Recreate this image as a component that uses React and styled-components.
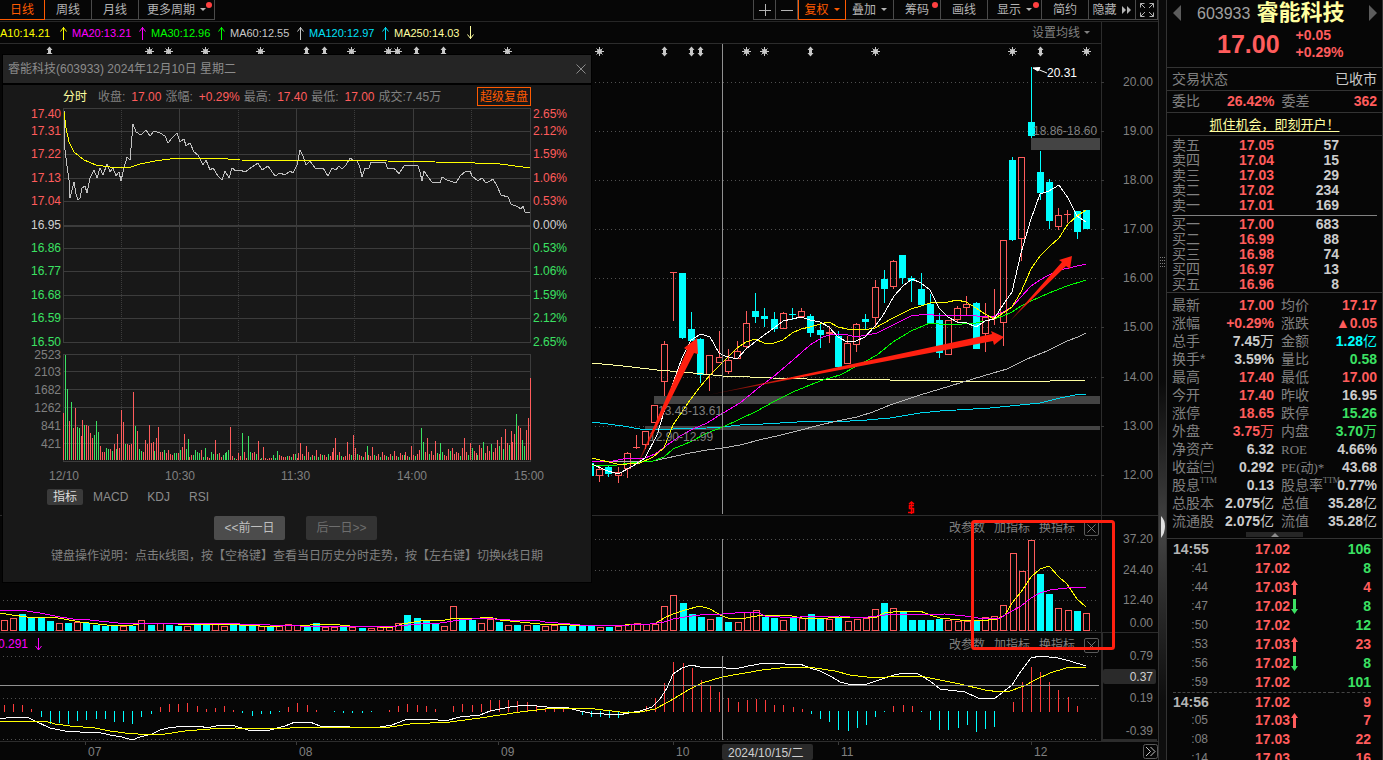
import React from "react";
import styled, { createGlobalStyle } from "styled-components";

const RED = "#ff5c5c";
const GREEN = "#3be163";
const CYAN = "#00ffff";
const GRAY = "#808080";
const LINE = "#333333";
const ORANGE = "#ff5a00";
const PALE = "#ffffa0";

const Global = createGlobalStyle`
  * { box-sizing: border-box; }
  html, body { margin: 0; background: #060606; }
  body {
    font-family: "Liberation Sans", "Noto Sans CJK SC", sans-serif;
    font-size: 12px;
    line-height: 16px;
    color: #b4b4b4;
    overflow: hidden;
  }
  button { font: inherit; color: inherit; background: none; border: 0; padding: 0; margin: 0; cursor: pointer; }
  table { border-collapse: collapse; table-layout: fixed; width: 100%; }
  td, th { padding: 0; font-weight: normal; white-space: nowrap; }
  svg { display: block; flex: none; }
`;

/* ---------- page frame ---------- */
const Page = styled.div`
  display: flex;
  height: 100vh;
  background: #060606;
`;
const Main = styled.main`
  position: relative;
  flex: 1;
  min-width: 0;
  overflow: hidden;
  display: flex;
  flex-direction: column;
  border-right: 1px solid ${LINE};
`;
const Gutter = styled.div`
  width: 7px;
  display: flex;
  flex-direction: column;
  background: linear-gradient(#0a0a0a 50%, #444 70%, #333 76%, #0e0e0e 92%);
`;

/* ---------- toolbar ---------- */
const Toolbar = styled.header`
  display: flex;
  justify-content: space-between;
  height: 22px;
  border-bottom: 1px solid #262626;
  flex: none;
`;
const ToolGroup = styled.nav`
  display: flex;
  height: 20px;
`;
const ToolButton = styled.button`
  display: flex;
  align-items: center;
  justify-content: center;
  gap: 5px;
  position: relative;
  width: ${(p) => p.$w}px;
  border: solid ${(p) => (p.$on ? ORANGE : "#4a4a4a")};
  border-width: 0 1px 1px ${(p) => (p.$edge ? "1px" : "0")};
  && { color: ${(p) => (p.$on ? ORANGE : "#b4b4b4")}; }
`;
const Caret = styled.span`
  width: 0;
  height: 0;
  border: 3px solid transparent;
  border-top-color: currentColor;
  border-bottom: 0;
`;
const Dot = styled.span`
  position: absolute;
  top: 2px;
  right: 2px;
  width: 6px;
  height: 6px;
  border-radius: 50%;
  background: #ff4040;
`;

/* ---------- moving average row ---------- */
const MaRow = styled.div`
  display: flex;
  align-items: center;
  height: 22px;
  flex: none;
  margin-right: 56px;
  padding-right: 11px;
  border: solid #2c2c2c;
  border-width: 0 1px 1px 0;
  font-size: 11px;
`;
const MaItem = styled.span`
  display: flex;
  align-items: center;
  gap: 7px;
  padding-right: 5px;
  white-space: nowrap;
  color: ${(p) => p.$c};
`;
const MaText = styled.span`
  min-width: ${(p) => p.$w}px;
`;
const MaSettings = styled.button`
  display: flex;
  align-items: center;
  gap: 4px;
  margin-left: auto;
  && { color: ${GRAY}; font-size: 12px; }
`;

/* ---------- charts ---------- */
const Charts = styled.section`
  position: relative;
  display: flex;
  flex-direction: column;
  flex: 1;
`;
const Panel = styled.div`
  position: relative;
  display: flex;
  justify-content: flex-end;
  & + & { border-top: 1px solid #2c2c2c; }
`;
const Overlay = styled.svg`
  position: absolute;
  top: 0;
  right: 0;
  pointer-events: none;
`;
const PanelTools = styled.div`
  position: absolute;
  top: 4px;
  right: 59px;
  display: flex;
  align-items: center;
  gap: 9px;
  color: ${GRAY};
`;
const CloseBox = styled.button`
  display: grid;
  place-items: center;
  width: 15px;
  height: 15px;
  border: 1px solid #5a5a5a !important;
  border-radius: 2px;
`;
const Label = styled.text`
  font-size: 12px;
  fill: ${(p) => p.$c || GRAY};
`;

/* ---------- day popup ---------- */
const Popup = styled.section`
  position: absolute;
  left: 3px;
  top: 55px;
  width: 588px;
  background: #181818;
  box-shadow: 0 0 0 1px #000;
  display: flex;
  flex-direction: column;
`;
const PopupHead = styled.div`
  display: flex;
  align-items: center;
  justify-content: space-between;
  height: 30px;
  padding: 0 5px;
  background: #252525;
  border-bottom: 2px solid #000;
  color: #8c8c8c;
`;
const InfoRow = styled.div`
  display: flex;
  align-items: center;
  gap: 4px;
  height: 23px;
  padding: 0 60px;
  color: ${GRAY};
`;
const InfoTitle = styled.span`
  margin-right: 7px;
  color: ${PALE};
`;
const Info = styled.span`
  display: flex;
  gap: 6px;
`;
const InfoValue = styled.span`
  color: ${RED};
`;
const Replay = styled.button`
  margin-left: auto;
  width: 54px;
  height: 19px;
  border: 1px solid ${ORANGE} !important;
  && { color: ${ORANGE}; }
`;
const Tabs = styled.div`
  display: flex;
  gap: 19px;
  margin: 3px 0 0 44px;
  height: 16px;
`;
const Tab = styled.button`
  && {
    color: ${(p) => (p.$on ? "#dddddd" : "#8c8c8c")};
    background: ${(p) => (p.$on ? "#3a3a3a" : "none")};
    padding: ${(p) => (p.$on ? "0 6px" : "0")};
    margin-right: ${(p) => (p.$on ? "-9px" : "0")};
    border-radius: 2px;
  }
`;
const Pager = styled.div`
  display: flex;
  gap: 21px;
  margin: 11px 0 0 211px;
`;
const PageButton = styled.button`
  width: 71px;
  height: 24px;
  border-radius: 2px;
  && {
    background: ${(p) => (p.disabled ? "#333333" : "#4c4c4c")};
    color: ${(p) => (p.disabled ? "#6e6e6e" : "#c0c0c0")};
  }
`;
const Help = styled.p`
  margin: 8px 0 18px 48px;
  color: ${GRAY};
  white-space: nowrap;
`;

/* ---------- side panel ---------- */
const Side = styled.aside`
  width: 217px;
  display: flex;
  flex-direction: column;
  overflow: hidden;
  border: solid ${LINE};
  border-width: 0 1px;
  font-size: 14px;
  line-height: 15px;
`;
const Quote = styled.div`
  height: 68px;
  flex: none;
  border-bottom: 1px solid ${LINE};
`;
const QuoteName = styled.div`
  display: flex;
  align-items: center;
  height: 26px;
  padding: 0 5px 0 6px;
`;
const Code = styled.span`
  margin-left: 16px;
  font-size: 16px;
  color: #a0a0a0;
`;
const Name = styled.h1`
  margin: 0 auto 0 6px;
  font-size: 22px;
  line-height: 26px;
  color: ${PALE};
`;
const QuotePrice = styled.div`
  display: flex;
  align-items: center;
  gap: 16px;
  height: 36px;
  padding-left: 50px;
  color: ${RED};
  font-weight: bold;
`;
const Big = styled.span`
  font-size: 25px;
`;
const Change = styled.span`
  line-height: 17px;
`;
const Strip = styled.div`
  display: flex;
  align-items: center;
  justify-content: ${(p) => (p.$center ? "center" : "space-between")};
  height: 23px;
  flex: none;
  padding: 0 5px;
  border-bottom: 1px solid ${LINE};
  color: ${GRAY};
`;
const StatusText = styled.span`
  color: #c8c8c8;
`;
const AdLink = styled.a`
  font-size: 13px;
  color: ${PALE};
  text-underline-offset: 2px;
`;
const Block = styled.div`
  flex: none;
  padding: ${(p) => p.$pad};
  border-bottom: 1px solid ${LINE};
`;
const BookLine = styled.hr`
  margin: 2px 0 1px;
  border: 0;
  border-top: 1px solid #808080;
`;
const Row = styled.tr`
  height: ${(p) => p.$h}px;
  line-height: ${(p) => p.$h}px;
  ${(p) => p.$dash && "border-top: 1px dashed #444;"}
`;
const Key = styled.th`
  text-align: left;
  color: ${GRAY};
  padding-left: ${(p) => p.$pl || 0}px !important;
`;
const Val = styled.td`
  text-align: right;
  font-weight: bold;
  color: ${(p) => p.$c || "#cccccc"};
  padding-right: ${(p) => p.$pr || 0}px !important;
`;
const Latin = styled.span`
  font-family: "Liberation Serif", "Noto Sans CJK SC", serif;
  font-size: 13px;
  line-height: 12px;
`;
const Sup = styled.span`
  display: inline-block;
  vertical-align: top;
  height: 10px;
  line-height: 10px;
  font-family: "Liberation Serif", serif;
  font-size: 8px;
`;
const Unit = styled.span`
  font-weight: normal;
  line-height: 12px;
`;
const Handle = styled.button`
  display: grid !important;
  place-items: center;
  width: 57px;
  height: 5px;
  margin: 2px auto 1px 74px !important;
  background: #262626 !important;
`;
const Ticks = styled.div`
  flex: 1;
  min-height: 0;
  overflow: hidden;
  padding: 1px 11px 0 6px;
`;
const TickTime = styled.th`
  text-align: right;
  padding-right: 1px !important;
  font-size: ${(p) => (p.$full ? 14 : 12)}px;
  font-weight: ${(p) => (p.$full ? "bold" : "normal")} !important;
  color: ${(p) => (p.$full ? "#b4b4b4" : GRAY)};
`;
const TickPrice = styled.div`
  display: flex;
  align-items: center;
  gap: 1px;
  padding-left: 46px;
  color: ${RED};
`;

/* ---------- data ---------- */
const BARS = 119;
const barX = (i) => Math.round(1086 - 9.17 * (BARS - 1 - i));

// [x, high, body top, body bottom, low, rising]
const candles = [
  [590, 462, 463, 476, 477, 0], [599, 466, 469, 476, 482, 1], [608, 465, 467, 474, 477, 0],
  [618, 467, 472, 476, 483, 1], [627, 452, 453, 469, 478, 1], [636, 435, 447, 448, 449, 1],
  [645, 431, 431, 445, 449, 1], [654, 405, 405, 423, 423, 1], [664, 341, 344, 382, 396, 1],
  [673, 272, 272, 273, 321, 1], [682, 273, 273, 338, 339, 0], [691, 312, 329, 341, 341, 0],
  [700, 338, 339, 375, 383, 0], [709, 355, 355, 375, 391, 1], [719, 331, 357, 363, 363, 1],
  [728, 349, 360, 372, 374, 1], [737, 341, 351, 359, 359, 1], [746, 311, 323, 347, 348, 1],
  [755, 293, 311, 317, 323, 0], [764, 308, 316, 319, 327, 0], [774, 312, 319, 329, 332, 0],
  [783, 312, 313, 329, 329, 1], [792, 308, 314, 315, 320, 0], [801, 308, 311, 317, 318, 1],
  [810, 314, 316, 333, 337, 0], [820, 322, 330, 335, 348, 0], [829, 326, 332, 334, 343, 1],
  [838, 331, 336, 367, 368, 0], [847, 336, 343, 364, 364, 1], [856, 323, 324, 345, 352, 1],
  [865, 314, 319, 322, 330, 0], [875, 280, 287, 318, 327, 1], [884, 270, 279, 289, 303, 0],
  [893, 260, 261, 287, 289, 1], [902, 255, 255, 278, 284, 0], [911, 276, 278, 281, 302, 0],
  [921, 273, 289, 305, 305, 0], [930, 294, 304, 323, 323, 0], [939, 313, 320, 353, 358, 0],
  [948, 320, 320, 355, 355, 1], [957, 306, 308, 320, 322, 1], [966, 296, 304, 308, 316, 1],
  [976, 302, 303, 349, 349, 0], [985, 303, 317, 334, 352, 1], [994, 289, 317, 318, 325, 1],
  [1003, 240, 240, 323, 346, 1], [1012, 157, 160, 240, 241, 0], [1021, 157, 157, 239, 261, 1],
  [1031, 67, 122, 136, 138, 0], [1040, 151, 172, 193, 200, 0], [1049, 179, 182, 221, 229, 0],
  [1058, 208, 215, 227, 230, 1], [1067, 210, 214, 215, 223, 1], [1077, 211, 211, 232, 239, 0],
  [1086, 210, 210, 229, 229, 0],
];

const averages = [
  [PALE, "592,363 623,366 657,370 683,372 703,374 723,376 750,377 773,378 807,379 857,379 890,380 926,380 950,381 985,382 1003,381 1050,381 1086,380"],
  ["#00d8f0", "592,422 623,426 640,429 673,429 707,428 723,427 740,425 763,424 797,422 823,421 850,421 867,420 890,418 920,413 940,411 990,408 1020,405 1040,403 1060,398 1075,395 1086,394"],
  ["#b4b4b4", "592,462 653,461 667,458 690,453 707,450 723,448 740,445 763,439 777,436 797,431 820,425 837,421 857,417 873,412 890,405 920,395 950,386 973,379 993,373 1007,369 1027,359 1047,351 1067,341 1078,337 1086,333"],
  ["#00ff00", "592,466 617,465 623,464 640,462 653,461 664,457 673,449 690,442 707,433 723,427 740,419 757,411 773,402 793,392 810,385 823,380 840,375 857,366 877,355 893,342 911,331 930,323 948,325 976,323 994,319 1003,316 1012,312 1021,306 1031,301 1049,293 1067,286 1086,280"],
  ["#ff00ff", "592,462 613,461 628,458 645,458 655,454 670,443 680,436 693,429 707,423 723,413 740,403 757,389 773,377 793,360 810,345 823,337 833,334 848,335 856,337 877,333 893,325 911,316 927,314 940,316 966,315 977,316 994,316 1003,312 1012,307 1021,297 1031,286 1040,280 1049,275 1060,270 1073,267 1086,264"],
  ["#ffff00", "592,458 617,464 627,464 640,463 653,457 664,448 673,425 682,412 690,400 700,387 710,375 722,363 737,348 746,342 755,339 764,343 774,343 783,340 792,333 801,329 810,327 820,324 829,322 838,327 847,329 863,330 875,328 893,318 911,309 921,306 930,303 948,302 957,300 966,302 976,308 985,314 994,319 1003,313 1012,307 1021,292 1031,269 1040,256 1049,247 1059,238 1068,224 1077,216 1086,210"],
  ["#ffffff", "592,464 605,470 618,474 633,466 645,458 657,435 664,412 673,383 682,358 691,340 701,334 710,337 719,353 725,356 737,359 746,349 760,338 774,328 783,321 792,319 801,317 810,320 820,322 829,327 838,337 847,342 856,341 865,337 875,326 882,317 890,303 894,296 903,286 912,279 921,283 930,290 939,308 948,317 957,322 967,323 976,327 985,321 994,319 1003,305 1012,292 1021,253 1031,219 1040,194 1049,191 1059,185 1068,198 1077,216 1086,222"],
];

const volumes = (
  "r11 r13 c17 c13 c13 c10 r8 c8 r9 c8 c6 c5 c6 r5 c5 r11 c6 r8 c6 c5 r5 c6 c7 r7 r5 c6 c6 c7 r5 c4 r5 r7 r6 c5 c8 r4 r4 c5 r4 c3 r3 r4 r5 r8 c16 c13 c11 " +
  "c7 r5 r25 c12 c11 r8 r12 c9 r6 c6 r6 c6 r5 r6 c5 c5 c5 c5 r4 c4 r5 r7 r8 r7 r7 r25 r36 c28 c17 c14 r12 c14 c9 r9 r19 r21 c14 c13 r11 c13 r13 c17 c12 r12 c14 r10 r12 r13 " +
  "r22 c28 r23 c20 c11 c11 c11 c12 r11 r10 r10 c10 r14 r15 r26 r78 r60 r91 c57 c37 r23 r21 c20 r18"
).split(" ");

const volumeLines = [
  ["#ffff00", "0,613 12,615 27,617 53,617 80,622 107,625 133,625 145,623 160,623 178,624 195,625 210,624 240,625 260,626 280,626 310,625 330,624 350,626 380,627 393,627 402,624 420,621 445,620 455,618 480,618 490,617 500,620 520,622 540,624 570,625 600,626 625,625 650,624 656,623 664,618 673,614 685,610 700,606 710,609 722,616 728,618 737,619 746,618 757,616 785,615 792,616 802,618 828,618 845,617 860,618 877,617 884,613 902,611 920,611 930,615 940,618 960,620 980,621 997,619 1005,615 1012,603 1021,592 1031,577 1040,569 1049,566 1059,577 1067,584 1077,599 1086,607"],
  ["#ff00ff", "0,611 20,610 40,613 60,617 73,619 90,620 118,623 160,623 240,624 300,626 397,626 420,624 440,623 460,620 485,618 495,619 510,620 535,620 545,622 570,624 590,626 630,625 650,624 664,622 673,619 685,617 700,615 722,614 735,613 757,612 765,616 780,617 800,617 840,616 860,618 885,615 945,614 965,616 985,619 1000,618 1012,611 1021,606 1031,598 1040,593 1050,590 1067,588 1086,587"],
];

const histogram = [
  7, 8, 7, 3, -6, -13, -12, -13, -10, -9, -8, -8, -11, -11, -13, -6, -3, 5, 8, 8, 9, 6, 3, 4, 6, 2, -2, -5, -3, -3, -1, 5, 9, 7, 2, 0, -1, -2, -2, -2, -1, 0, 2, 6, 8, 7, 6,
  3, 0, 6, 8, 7, 8, 12, 12, 12, 11, 10, 6, 4, 4, 3, 0, -4, -6, -6, -7, -7, -2, 1, 6, 14, 29, 50, 49, 44, 32, 26, 20, 14, 10, 12, 13, 12, 7, 7, 5, 3, -3, -8, -11, -19, -20, -17, -14,
  -6, -1, 6, 7, 6, -1, -9, -19, -19, -17, -14, -21, -18, -16, 0, 10, 30, 45, 40, 30, 22, 15, 6, 0,
];

const macdLines = [
  ["#ffffff", "0,719 12,717 27,717 35,721 50,728 65,731 80,732 97,732 110,735 122,737 132,740 140,737 152,734 160,730 168,728 185,726 200,726 207,728 220,725 232,725 248,730 270,730 285,726 295,722 310,722 320,726 350,727 380,727 392,725 405,720 430,719 445,721 460,717 480,715 490,711 510,707 527,705 547,707 565,707 580,711 590,713 618,715 640,711 652,707 660,699 667,688 673,674 682,668 691,665 700,667 717,667 735,669 748,666 765,663 785,664 800,664 810,668 820,671 832,677 840,682 848,684 867,684 882,679 894,675 905,673 918,674 930,681 940,689 965,692 978,698 994,699 1003,692 1012,685 1021,671 1031,658 1040,656 1058,658 1070,661 1086,666"],
  ["#ffff00", "0,722 20,721 45,721 55,724 70,726 95,728 110,731 125,733 150,735 165,734 185,731 210,729 235,728 280,729 300,727 390,727 410,724 430,723 450,722 480,718 500,715 520,712 545,709 565,708 595,709 620,712 640,712 655,709 668,702 680,695 690,689 702,683 722,677 745,673 762,670 780,668 800,667 815,668 835,671 850,675 875,678 900,676 925,677 940,680 960,684 985,690 1000,692 1010,691 1024,686 1035,680 1050,673 1066,668 1086,667"],
];

const dayPrice =
  "64,110 65,150 67,166 69,180 70,198 72,190 74,182 76,194 78,200 80,198 82,188 85,186 87,193 90,178 94,170 97,178 100,168 103,175 107,164 110,172 113,168 116,176 119,172 121,181 124,168 127,157 130,160 133,124 136,132 141,135 146,130 150,136 154,131 160,133 165,136 168,143 172,138 177,133 180,142 184,139 186,146 190,143 194,152 198,155 203,165 206,160 210,170 213,168 218,176 222,180 225,171 229,178 232,168 236,171 240,170 245,172 252,167 258,163 262,170 268,166 275,176 280,173 285,175 290,171 293,173 297,165 300,150 303,156 306,165 310,161 315,168 323,168 328,176 332,168 336,170 339,166 342,169 346,165 350,158 354,161 357,160 360,168 362,177 365,168 369,168 371,162 385,162 388,169 393,168 396,170 399,174 402,169 405,165 418,166 420,172 422,181 424,171 428,177 432,182 440,183 442,177 447,180 456,183 460,176 466,171 470,171 472,176 478,181 482,178 486,183 490,181 493,179 497,186 501,195 508,197 511,204 518,207 521,209 523,206 525,212 530,213";
const dayAverage =
  "64,112 66,128 69,142 74,152 84,160 96,165 110,167 128,168 140,164 155,161 170,159 190,158 215,158 240,160 387,161 435,162 475,163 500,164 515,166 530,168";

const dayVolumes = (
  "r47 g105 g71 r39 g58 r32 r52 g33 g32 r24 r40 g35 r35 r34 r27 r22 g25 g39 g28 r14 r8 r8 g12 g11 r11 g9 r16 g11 r26 r12 r50 r38 g16 r16 r15 r16 r68 g34 r29 g11 g9 r8 r20 r16 r35 r17 r18 g9 r22 r33 r8 r8 g10 r7 r10 r6 r5 g7 g7 r7 " +
  "g10 r13 r26 g11 g21 r3 r5 g5 g10 g8 g7 r10 g3 g12 r3 r2 g8 g6 r20 g6 r7 r3 g5 g7 g8 g10 r33 r4 g2 r1 r7 r4 g27 r8 r2 g24 g8 r7 r8 g6 r19 r1 g2 r13 r2 r1 r2 r2 g5 g2 g9 r5 r4 r3 r3 g4 r4 g3 r6 g6 " +
  "r2 r7 r17 r6 g4 r14 r8 g3 r5 g4 r10 g3 r6 g5 r5 r3 g6 r4 r8 r12 r22 g5 r8 g4 r3 r4 r18 r6 g5 r25 r12 g6 r5 r4 g3 r8 g14 r5 r4 r13 g5 r4 r6 g3 r8 r5 g4 r3 r6 g4 r9 r4 g3 r7 r5 " +
  "g5 r8 r4 g3 r14 r5 g4 r6 r10 g32 g18 r8 r22 g6 r9 r5 r19 g7 r6 g17 g8 r5 r4 r11 g9 r12 r6 r8 r7 g4 r12 r22 r8 g5 r17 g12 r9 r7 g5 r15 r12 g18 r7 r14 r9 g16 r8 r12 r20 g14 r23 g11 r31 r17 g15 r29 r18 r26 g46 r34 r32 g20 g14 r30 r42 r82"
).split(" ");

const book = {
  sell: [["卖五", "17.05", "57"], ["卖四", "17.04", "15"], ["卖三", "17.03", "29"], ["卖二", "17.02", "234"], ["卖一", "17.01", "169"]],
  buy: [["买一", "17.00", "683"], ["买二", "16.99", "88"], ["买三", "16.98", "74"], ["买四", "16.97", "13"], ["买五", "16.96", "8"]],
};

const stats = [
  ["最新", "17.00", RED, "均价", "17.17", RED],
  ["涨幅", "+0.29%", RED, "涨跌", "▲0.05", RED],
  ["总手", "7.45万", "", "金额", "1.28亿", CYAN],
  ["换手*", "3.59%", "", "量比", "0.58", GREEN],
  ["最高", "17.40", RED, "最低", "17.00", RED],
  ["今开", "17.40", RED, "昨收", "16.95", ""],
  ["涨停", "18.65", RED, "跌停", "15.26", GREEN],
  ["外盘", "3.75万", RED, "内盘", "3.70万", GREEN],
  ["净资产", "6.32", "", <Latin>ROE</Latin>, "4.66%", ""],
  ["收益㈢", "0.292", "", <Latin>PE(动)*</Latin>, "43.68", ""],
  [<>股息<Sup>TTM</Sup></>, "0.13", "", <>股息率<Sup>TTM</Sup></>, "0.77%", ""],
  ["总股本", "2.075亿", "", "总值", "35.28亿", ""],
  ["流通股", "2.075亿", "", "流值", "35.28亿", ""],
];

const ticks = [
  ["14:55", "17.02", "", "106", GREEN], [":41", "17.02", "", "8", GREEN], [":44", "17.03", "up", "4", RED],
  [":47", "17.02", "down", "8", GREEN], [":50", "17.02", "", "12", GREEN], [":53", "17.03", "up", "23", RED],
  [":56", "17.02", "down", "8", GREEN], [":59", "17.02", "", "101", GREEN], ["14:56", "17.02", "", "9", RED],
  [":05", "17.03", "up", "7", RED], [":08", "17.03", "", "22", RED], [":14", "17.03", "", "16", RED],
];

/* ---------- small drawings ---------- */
const TrendArrow = ({ down }) => (
  <svg width="7" height="14" viewBox="0 0 7 14" fill="none" stroke="currentColor">
    <path d={down ? "M3.5 0V13M0.5 8.5L3.5 12.5L6.5 8.5" : "M3.5 14V1M0.5 5.5L3.5 1.5L6.5 5.5"} />
  </svg>
);
const TickArrow = ({ down }) => (
  <svg width="7" height="15" viewBox="0 0 7 15" fill={down ? GREEN : RED}>
    <path d={down ? "M2 0H5V10H7L3.5 15L0 10H2Z" : "M2 15H5V5H7L3.5 0L0 5H2Z"} />
  </svg>
);
const Cross = ({ size = 9 }) => (
  <svg width={size} height={size} viewBox="0 0 10 10" stroke="currentColor" fill="none">
    <path d="M0.5 0.5L9.5 9.5M9.5 0.5L0.5 9.5" />
  </svg>
);
const StepTriangle = ({ right }) => (
  <svg width="8" height="16" viewBox="0 0 8 16" fill="#5c5c5c">
    <path d={right ? "M0 0L8 8L0 16Z" : "M8 0L0 8L8 16Z"} />
  </svg>
);
const Expand = () => (
  <svg width="14" height="14" viewBox="0 0 14 14" fill="none" stroke="currentColor">
    <path d="M0.5 4.5V0.5H4.5M0.5 0.5L5 5M9.5 0.5H13.5V4.5M13.5 0.5L9 5M0.5 9.5V13.5H4.5M0.5 13.5L5 9M13.5 9.5V13.5H9.5M13.5 13.5L9 9" />
  </svg>
);
const Forward = () => (
  <svg width="10" height="8" viewBox="0 0 10 8" fill="currentColor">
    <path d="M0 0L4 4L0 8ZM5 0L9 4L5 8Z" />
  </svg>
);
const Sun = ({ x, y }) => (
  <g stroke="#c8c8c8" transform={`translate(${x} ${y})`}>
    <circle r="2.5" fill="#c8c8c8" stroke="none" />
    <path d="M-4.5 0H4.5M0 -4.5V4.5M-3 -3L3 3M3 -3L-3 3" />
  </g>
);
const Pin = ({ x, y }) => (
  <path transform={`translate(${x} ${y})`} d="M0 -5L3 -1.5H1.5V1.5H3L0 5L-3 1.5H-1.5V-1.5H-3Z" fill="#c8c8c8" />
);
const Lines = ({ data }) =>
  data.map(([c, pts]) => <polyline key={c} points={pts} fill="none" stroke={c} shapeRendering="crispEdges" />);
const Dotted = ({ ys }) =>
  ys.map((y) => (
    <line key={y} x1="3" x2="1098" y1={y + 0.5} y2={y + 0.5} stroke="#505050" strokeDasharray="1 3" shapeRendering="crispEdges" />
  ));
const AxisLabels = ({ rows }) =>
  rows.map(([y, t]) => (
    <Label key={t} x="1153" y={y + 4} textAnchor="end">{t}</Label>
  ));

function PriceChart() {
  const suns = [149, 168, 205, 260, 351, 388, 397, 507, 599, 746, 764, 875, 1012, 1086];
  const pins = [49, 306, 324, 416, 443, 664, 691, 700, 810, 1040];
  const levels = [82, 131, 180, 229, 278, 327, 377, 426, 475];
  return (
    <svg width="1158" height="471" viewBox="0 44 1158 471" role="img" aria-label="日K线">
      <Dotted ys={levels} />
      <g fill="#444444">
        <rect x="654" y="396" width="446" height="8" />
        <rect x="645" y="426" width="455" height="4" />
        <rect x="1031" y="138" width="69" height="12" />
      </g>
      {suns.map((x) => <Sun key={x} x={x + 0.5} y={51.5} />)}
      {pins.map((x) => <Pin key={x} x={x + 0.5} y={51.5} />)}
      <g shapeRendering="crispEdges">
        {candles.map(([x, hi, top, bot, lo, up]) =>
          up ? (
            <g key={x} fill={RED}>
              <rect x={x} y={hi} width="1" height={top - hi} />
              <rect x={x} y={bot} width="1" height={lo - bot} />
              {bot - top > 2 ? (
                <rect x={x - 2.5} y={top + 0.5} width="6" height={bot - top - 1} fill="none" stroke={RED} />
              ) : (
                <rect x={x - 3} y={top} width="7" height={bot - top} />
              )}
            </g>
          ) : (
            <g key={x} fill={CYAN}>
              <rect x={x} y={hi} width="1" height={lo - hi} />
              <rect x={x - 3} y={top} width="7" height={bot - top} />
            </g>
          )
        )}
      </g>
      <Lines data={averages} />
      <Label x="658" y="415">13.48-13.61</Label>
      <Label x="649" y="441">12.90-12.99</Label>
      <Label x="1033" y="135">18.86-18.60</Label>
      <Label x="1047" y="77" $c="#ffffff">20.31</Label>
      <path d="M1033 68L1040 67.500L1038 71ZM1037 69L1047 73" fill="#fff" stroke="#fff" />
      <path d="M914 505.500H909.500V508.500H913.500V512.500H908M911.500 503V514M909 504L911.500 502L914 504" fill="none" stroke="#ff0000" strokeWidth="1.500" />
      <path d="M1101.500 44V515" stroke="#2c2c2c" fill="none" />
      {levels.map((y) => <rect key={y} x="1101" y={y} width="3" height="1" fill="#3a3a3a" />)}
      <AxisLabels rows={levels.map((y, i) => [y, `${20 - i}.00`])} />
    </svg>
  );
}

function VolumeChart() {
  return (
    <svg width="1158" height="116" viewBox="0 516 1158 116" role="img" aria-label="成交量">
      <Dotted ys={[539, 570, 600, 630]} />
      <g shapeRendering="crispEdges">
        {volumes.map((v, i) => {
          const h = Number(v.slice(1));
          const x = barX(i);
          return v[0] === "r" ? (
            <rect key={i} x={x - 2.5} y={631.5 - h} width="6" height={h - 1} fill="#060606" stroke={RED} />
          ) : (
            <rect key={i} x={x - 3} y={631 - h} width="7" height={h} fill={CYAN} />
          );
        })}
      </g>
      <Lines data={volumeLines} />
      <path d="M1101.500 516V632" stroke="#2c2c2c" />
      <AxisLabels rows={[[539, "37.20"], [570, "24.40"], [600, "12.40"], [623, "0.00"]]} />
    </svg>
  );
}

function MacdChart() {
  return (
    <svg width="1158" height="108" viewBox="0 633 1158 108" role="img" aria-label="MACD">
      <Dotted ys={[656, 698, 739]} />
      <Label x="-2" y="648" $c="#ff00ff">0.291</Label>
      <path d="M38.500 638V650M35.500 646L38.500 650L41.500 646" stroke="#ff00ff" fill="none" />
      <g shapeRendering="crispEdges">
        {histogram.map((v, i) => (
          <rect key={i} x={barX(i)} y={v > 0 ? 712 - v : 711} width="1" height={Math.abs(v)} fill={v > 0 ? "#ff3c3c" : CYAN} />
        ))}
      </g>
      <Lines data={macdLines} />
      <path d="M1102 633V740H1157" stroke="#2c2c2c" strokeWidth="2" fill="none" />
      <rect x="1103" y="669" width="53" height="15" rx="2" fill="#2a2a2a" />
      <AxisLabels rows={[[656, "0.79"], [698, "0.19"], [731, "-0.39"]]} />
      <Label x="1153" y="681" textAnchor="end" $c="#d0d0d0">0.37</Label>
    </svg>
  );
}

function TimeAxis() {
  const months = [[85, "07"], [296, "08"], [498, "09"], [673, "10"], [838, "11"], [1031, "12"]];
  return (
    <svg width="1158" height="18" viewBox="0 742 1158 18" role="img" aria-label="时间轴">
      {months.map(([x, t]) => (
        <g key={t}>
          <rect x={x} y="742" width="1" height="3" fill="#3a3a3a" />
          <Label x={x + 3} y="756">{t}</Label>
        </g>
      ))}
      <rect x="722" y="744" width="91" height="16" rx="2" fill="#2a2a2a" />
      <Label x="728" y="757" $c="#d0d0d0">2024/10/15/二</Label>
      <rect x="1143.500" y="744.500" width="14" height="14" rx="2" fill="none" stroke="#5a5a5a" />
      <path d="M1146 747L1150.500 751.500L1146 756M1150.500 747L1155 751.500L1150.500 756" fill="none" stroke="#c8c8c8" />
    </svg>
  );
}

function Annotations() {
  return (
    <Overlay width="1158" height="716" viewBox="0 44 1158 716" aria-hidden="true">
      <defs>
        <linearGradient id="fadeA" x1="0" y1="1" x2="0.3" y2="0.3">
          <stop offset="0" stopColor="#ff2010" stopOpacity="0.2" />
          <stop offset="0.5" stopColor="#ff2010" />
        </linearGradient>
        <linearGradient id="fadeB">
          <stop offset="0" stopColor="#ff2010" stopOpacity="0.2" />
          <stop offset="0.3" stopColor="#ff2010" />
        </linearGradient>
      </defs>
      <path d="M722.500 44V514M722.500 539V631M722.500 656V740M0 685.500H1099" stroke="#909090" />
      <path d="M635 470L687 350L684 348L697 338L698 354L694 353Z" fill="url(#fadeA)" />
      <path d="M708 395L992 334L991 331L1004 337L994 345L993 341Z" fill="url(#fadeB)" />
      <path d="M1009 322L1062 262L1059 260L1072 256L1070 269L1066 266Z" fill="url(#fadeB)" />
      <rect x="972.500" y="521.500" width="141" height="127" rx="2" fill="none" stroke="#ff2010" strokeWidth="3" />
    </Overlay>
  );
}

const Tools = () => (
  <PanelTools>
    <button>改参数</button>
    <button>加指标</button>
    <button>换指标</button>
    <CloseBox aria-label="关闭"><Cross /></CloseBox>
  </PanelTools>
);

function DayChart() {
  const rows = [108, 131, 154, 178, 201, 225, 248, 271, 295, 318, 342];
  const prices = ["17.40", "17.31", "17.22", "17.13", "17.04", "16.95", "16.86", "16.77", "16.68", "16.59", "16.50"];
  const rates = ["2.65%", "2.12%", "1.59%", "1.06%", "0.53%", "0.00%", "0.53%", "1.06%", "1.59%", "2.12%", "2.65%"];
  const vols = [[354, "2523"], [371, "2103"], [389, "1682"], [407, "1262"], [425, "841"], [443, "421"]];
  const color = (i) => (i < 5 ? RED : i > 5 ? GREEN : "#d0d0d0");
  return (
    <svg width="588" height="378" viewBox="3 108 588 378" role="img" aria-label="分时走势">
      <g stroke="#3c3c3c" shapeRendering="crispEdges" fill="none">
        {rows.map((y) => <path key={y} d={`M63 ${y + 0.5}H531`} strokeWidth={y === 225 ? 2 : 1} />)}
        {[354, 371, 389, 407, 425, 443, 461].map((y) => <path key={y} d={`M63 ${y + 0.5}H531`} />)}
        {[63, 179, 296, 413, 530].map((x) => <path key={x} d={`M${x + 0.5} 108V343M${x + 0.5} 354V462`} />)}
        {[121, 238, 354, 471].map((x) => (
          <path key={x} d={`M${x + 0.5} 108V343M${x + 0.5} 354V462`} strokeDasharray="1 1" />
        ))}
      </g>
      <g shapeRendering="crispEdges">
        {dayVolumes.map((v, i) => {
          const h = Number(v.slice(1));
          const x = Math.round(63 + (i * 467) / (dayVolumes.length - 1));
          return <rect key={i} x={x} y={460 - h} width="1" height={h} fill={v[0] === "r" ? RED : GREEN} />;
        })}
        <polyline points={dayPrice} fill="none" stroke="#c0c0c0" />
        <polyline points={dayAverage} fill="none" stroke="#ffff00" />
      </g>
      {rows.map((y, i) => (
        <g key={y}>
          <Label x="61" y={(i ? y : 114) + 4} textAnchor="end" $c={color(i)}>{prices[i]}</Label>
          <Label x="533" y={(i ? y : 114) + 4} $c={color(i)}>{rates[i]}</Label>
        </g>
      ))}
      {vols.map(([y, t]) => <Label key={t} x="61" y={y + 5} textAnchor="end">{t}</Label>)}
      {[[49, "12/10"], [165, "10:30"], [281, "11:30"], [397, "14:00"], [514, "15:00"]].map(([x, t]) => (
        <Label key={t} x={x} y="480">{t}</Label>
      ))}
    </svg>
  );
}

function DayPopup() {
  const figures = [["收盘:", "17.00"], ["涨幅:", "+0.29%"], ["最高:", "17.40"], ["最低:", "17.00"]];
  return (
    <Popup>
      <PopupHead>
        <span>睿能科技(603933) 2024年12月10日 星期二</span>
        <button aria-label="关闭"><Cross size={10} /></button>
      </PopupHead>
      <InfoRow>
        <InfoTitle>分时</InfoTitle>
        {figures.map(([k, v]) => (
          <Info key={k}>{k}<InfoValue>{v}</InfoValue></Info>
        ))}
        <span>成交:7.45万</span>
        <Replay>超级复盘</Replay>
      </InfoRow>
      <DayChart />
      <Tabs>
        <Tab $on>指标</Tab>
        <Tab>MACD</Tab>
        <Tab>KDJ</Tab>
        <Tab>RSI</Tab>
      </Tabs>
      <Pager>
        <PageButton>&lt;&lt;前一日</PageButton>
        <PageButton disabled>后一日&gt;&gt;</PageButton>
      </Pager>
      <Help>键盘操作说明：点击k线图，按【空格键】查看当日历史分时走势，按【左右键】切换k线日期</Help>
    </Popup>
  );
}

const Amount = ({ text }) => {
  const unit = /[万亿]$/.test(text) ? text.slice(-1) : "";
  return <>{unit ? text.slice(0, -1) : text}{unit && <Unit>{unit}</Unit>}</>;
};

const BookTable = ({ rows }) => (
  <table>
    <colgroup><col /><col width="65" /><col width="103" /></colgroup>
    <tbody>
      {rows.map(([k, p, v]) => (
        <Row key={k} $h={15}>
          <Key>{k}</Key>
          <Val $c={RED}>{p}</Val>
          <Val $pr={38}>{v}</Val>
        </Row>
      ))}
    </tbody>
  </table>
);

function SidePanel() {
  return (
    <Side>
      <Quote>
        <QuoteName>
          <button aria-label="上一只"><StepTriangle /></button>
          <Code>603933</Code>
          <Name>睿能科技</Name>
          <button aria-label="下一只"><StepTriangle right /></button>
        </QuoteName>
        <QuotePrice>
          <Big>17.00</Big>
          <Change>+0.05<br />+0.29%</Change>
        </QuotePrice>
      </Quote>
      <Strip>
        <span>交易状态</span>
        <StatusText>已收市</StatusText>
      </Strip>
      <Block $pad="3px 5px">
        <table>
          <tbody>
            <Row $h={15}>
              <Key>委比</Key><Val $c={RED}>26.42%</Val>
              <Key $pl={7}>委差</Key><Val $c={RED}>362</Val>
            </Row>
          </tbody>
        </table>
      </Block>
      <Strip $center>
        <AdLink href="#open">抓住机会，即刻开户！</AdLink>
      </Strip>
      <Block $pad="2px 5px 0">
        <BookTable rows={book.sell} />
        <BookLine />
        <BookTable rows={book.buy} />
      </Block>
      <Block $pad="3px 5px 0">
        <table>
          <colgroup><col width="44" /><col /><col width="52" /><col width="51" /></colgroup>
          <tbody>
            {stats.map(([k1, v1, c1, k2, v2, c2], i) => (
              <Row key={i} $h={18}>
                <Key>{k1}</Key>
                <Val $c={c1}><Amount text={v1} /></Val>
                <Key $pl={7}>{k2}</Key>
                <Val $c={c2}><Amount text={v2} /></Val>
              </Row>
            ))}
          </tbody>
        </table>
        <Handle aria-label="收起">
          <svg width="8" height="4" viewBox="0 0 8 4" fill="#8c8c8c"><path d="M4 0L8 4H0Z" /></svg>
        </Handle>
      </Block>
      <Ticks>
        <table>
          <colgroup><col width="36" /><col /><col width="40" /></colgroup>
          <tbody>
            {ticks.map(([t, p, dir, v, c]) => (
              <Row key={t} $h={t === "14:56" ? 18 : 19} $dash={t === "14:56"}>
                <TickTime $full={t[0] !== ":"}>{t}</TickTime>
                <Val>
                  <TickPrice>{p}{dir && <TickArrow down={dir === "down"} />}</TickPrice>
                </Val>
                <Val $c={c}>{v}</Val>
              </Row>
            ))}
          </tbody>
        </table>
      </Ticks>
    </Side>
  );
}

export default function App() {
  return (
    <Page>
      <Global />
      <Main>
        <Toolbar>
          <ToolGroup>
            <ToolButton $w={45} $on>日线</ToolButton>
            <ToolButton $w={47}>周线</ToolButton>
            <ToolButton $w={47}>月线</ToolButton>
            <ToolButton $w={76}>更多周期<Caret /><Dot /></ToolButton>
          </ToolGroup>
          <ToolGroup>
            <ToolButton $w={23} $edge aria-label="放大">
              <svg width="12" height="12" viewBox="0 0 12 12" stroke="#b4b4b4"><path d="M0 6.500H12M6.500 0V12" /></svg>
            </ToolButton>
            <ToolButton $w={22} aria-label="缩小">
              <svg width="12" height="12" viewBox="0 0 12 12" stroke="#b4b4b4"><path d="M0 6.500H12" /></svg>
            </ToolButton>
            <ToolButton $w={48} $on $edge>复权<Caret /></ToolButton>
            <ToolButton $w={48}>叠加<Caret /></ToolButton>
            <ToolButton $w={47}>筹码<Dot /></ToolButton>
            <ToolButton $w={47}>画线</ToolButton>
            <ToolButton $w={54}>显示<Caret /><Dot /></ToolButton>
            <ToolButton $w={47}>简约</ToolButton>
            <ToolButton $w={47}>隐藏<Forward /></ToolButton>
            <ToolButton $w={22} aria-label="全屏"><Expand /></ToolButton>
          </ToolGroup>
        </Toolbar>
        <MaRow>
          <MaItem $c="#ffff00"><MaText $w={53}>A10:14.21</MaText><TrendArrow /></MaItem>
          <MaItem $c="#ff00ff"><MaText $w={60}>MA20:13.21</MaText><TrendArrow /></MaItem>
          <MaItem $c="#00ff00"><MaText $w={60}>MA30:12.96</MaText><TrendArrow /></MaItem>
          <MaItem $c="#c8c8c8"><MaText $w={60}>MA60:12.55</MaText><TrendArrow /></MaItem>
          <MaItem $c="#00e0f8"><MaText $w={66}>MA120:12.97</MaText><TrendArrow /></MaItem>
          <MaItem $c={PALE}><MaText $w={66}>MA250:14.03</MaText><TrendArrow down /></MaItem>
          <MaSettings>设置均线<Caret /></MaSettings>
        </MaRow>
        <Charts>
          <Panel><PriceChart /></Panel>
          <Panel><VolumeChart /><Tools /></Panel>
          <Panel><MacdChart /><Tools /></Panel>
          <Panel><TimeAxis /></Panel>
          <Annotations />
        </Charts>
        <DayPopup />
      </Main>
      <Gutter>
        <svg width="7" height="760" viewBox="0 0 7 760">
          <path d="M1 257.500H7M1 260.500H7M1 263.500H7M1 266.500H7" stroke="#808080" strokeDasharray="1 1" />
          <path d="M2 516Q6 520 6 526Q6 533 2 538Z" fill="#e0e0e0" />
        </svg>
      </Gutter>
      <SidePanel />
    </Page>
  );
}
